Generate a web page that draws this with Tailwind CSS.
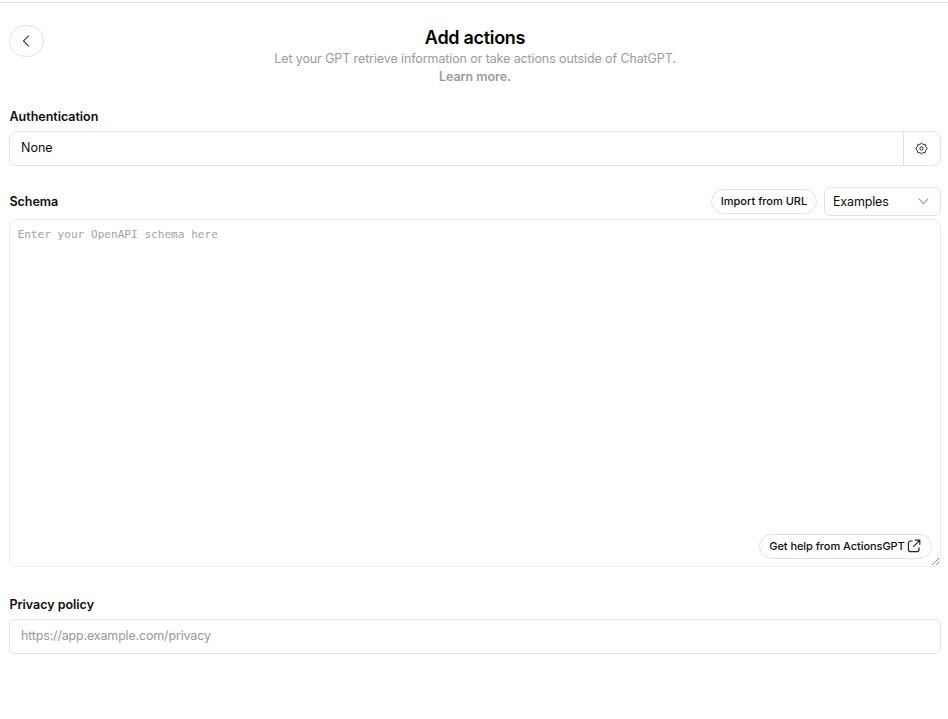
<!DOCTYPE html>
<html lang="en">
<head>
<meta charset="utf-8">
<title>Add actions</title>
<script src="https://cdn.jsdelivr.net/npm/@tailwindcss/browser@4"></script>
</head>
<body class="h-[719px] overflow-hidden bg-white pt-[2px] font-['Inter',sans-serif] text-[12.5px] text-[#0d0d0d]">
<main class="flex h-[717px] flex-col border-t border-[#dedede] pr-[7px] pl-[9px]">
  <header class="mt-[22px] grid grid-cols-[35px_1fr_35px] items-start">
    <button aria-label="Back" class="flex h-8 w-[35px] items-center justify-center rounded-full border border-[#e2e2e2] pr-px">
      <svg class="h-3 w-2" viewBox="0 0 8 12" fill="none" stroke="#444" stroke-width="1.1" stroke-linecap="round" stroke-linejoin="round"><path d="M6.5 .8 1.5 6l5 5.2"/></svg>
    </button>
    <div class="text-center whitespace-nowrap">
      <h1 class="h-[25px] text-[18px] leading-[25px] font-semibold tracking-[-0.3px] text-black">Add actions</h1>
      <p class="h-[18px] leading-[18px] tracking-[-0.11px] text-[#9b9b9b]">Let your GPT retrieve information or take actions outside of ChatGPT.</p>
      <a class="block h-[18px] leading-[18px] font-semibold tracking-[-0.04px] text-[#9b9b9b]">Learn more.</a>
    </div>
  </header>

  <section class="mt-[21px]">
    <h2 class="h-[24px] pl-[0.5px] leading-[20px] font-semibold tracking-[-0.02px]">Authentication</h2>
    <div class="flex h-[35px] rounded-lg border border-[#e2e2e2]">
      <div class="flex-1 pl-[11px] leading-[31px]">None</div>
      <button aria-label="Authentication settings" class="flex w-[37px] items-center justify-center border-l border-[#e2e2e2] pr-[2px] pb-px">
        <svg class="h-[13px] w-[13px]" viewBox="0 0 14 14" fill="none" stroke="#222" stroke-width="1.05" stroke-linejoin="round"><path d="M7 1.1 8.7 2.6l2.1-.2.6 2.2L13 7l-1.6 2.4-.6 2.2-2.1-.2L7 12.9l-1.7-1.5-2.1.2-.6-2.2L1 7l1.6-2.4.6-2.2 2.1.2z"/><circle cx="7" cy="7" r="1.7"/></svg>
      </button>
    </div>
  </section>

  <section class="mt-[21px]">
    <div class="flex h-[32px] items-start">
      <h2 class="flex-1 pl-[0.5px] leading-[29px] font-semibold tracking-[-0.05px]">Schema</h2>
      <button class="mt-[2px] h-[25px] w-[106px] rounded-full border border-[#e2e2e2] text-[11px] leading-[23px] font-medium whitespace-nowrap">Import from URL</button>
      <div class="ml-[7px] flex h-[29px] w-[117px] items-center justify-between rounded-md border border-[#e2e2e2] pr-[11px] pl-[8px]">
        <span class="pt-[2px] tracking-[-0.15px]">Examples</span>
        <svg class="h-[7px] w-[11px]" viewBox="0 0 11 7" fill="none" stroke="#999" stroke-width="1.1" stroke-linecap="round" stroke-linejoin="round"><path d="m1.2 1.2 4.3 4.4 4.3-4.4"/></svg>
      </div>
    </div>
    <div class="relative h-[348px] rounded-lg border border-[#ececec] px-[7.5px] pt-[7px] font-['DejaVu_Sans_Mono',monospace] text-[11.1px] leading-[15px] text-[#a3a3a3]">
      <span>Enter your OpenAPI schema here</span>
      <button class="absolute right-[8px] bottom-[7px] flex h-[25px] w-[173px] items-center justify-center gap-[2px] rounded-full border border-[#e2e2e2] bg-white pr-px font-['Inter',sans-serif] text-[11px] font-medium whitespace-nowrap text-[#0d0d0d]">
        <span class="tracking-[-0.05px]">Get help from ActionsGPT</span>
        <svg class="mb-px h-3.5 w-3.5" viewBox="0 0 14 14" fill="none" stroke="#222" stroke-width="1.2" stroke-linecap="round" stroke-linejoin="round"><path d="M5.2 2H3.6A2.2 2.2 0 0 0 1.4 4.2v6.2a2.2 2.2 0 0 0 2.2 2.2h6.2a2.2 2.2 0 0 0 2.2-2.2V8.8M8.4 1.2h4.4v4.4M12.6 1.4 6.6 7.4"/></svg>
      </button>
      <svg class="absolute right-0 bottom-0 h-[9px] w-[9px]" viewBox="0 0 9 9" stroke="#777" stroke-width=".8"><path d="m1 8 7-7M5 8l3-3"/></svg>
    </div>
  </section>

  <section class="mt-[27px]">
    <h2 class="h-[25px] pl-[0.5px] leading-[21px] font-semibold tracking-[-0.02px]">Privacy policy</h2>
    <div class="h-[35px] rounded-md border border-[#e2e2e2] pl-[11px] leading-[31px] tracking-[-0.17px] text-[#999]">https://app.example.com/privacy</div>
  </section>
</main>
</body>
</html>
